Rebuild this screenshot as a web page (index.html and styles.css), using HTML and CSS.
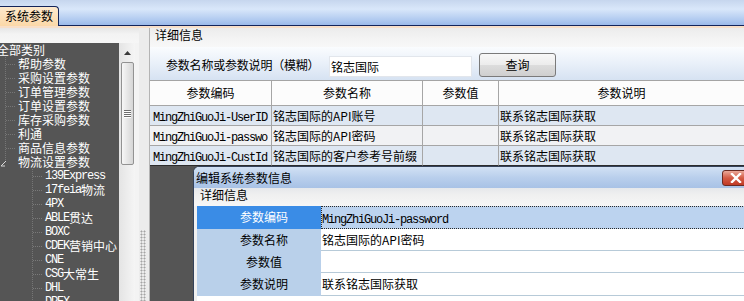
FILE: index.html
```html
<!DOCTYPE html>
<html lang="zh-CN">
<head>
<meta charset="utf-8">
<title>系统参数</title>
<link rel="stylesheet" href="styles.css">
</head>
<body>
<div class="app">
  <div class="topbar">
    <div class="tab">系统参数</div>
    <div class="tabrest"></div>
  </div>
  <div class="peach"></div>
  <div class="main">
    <div class="left">
      <div class="treewrap">
        <div class="tree">
          <div class="node root">全部类别</div>
          <div class="node l1"><span class="ind"></span>帮助参数</div>
          <div class="node l1"><span class="ind"></span>采购设置参数</div>
          <div class="node l1"><span class="ind"></span>订单管理参数</div>
          <div class="node l1"><span class="ind"></span>订单设置参数</div>
          <div class="node l1"><span class="ind"></span>库存采购参数</div>
          <div class="node l1"><span class="ind"></span>利通</div>
          <div class="node l1"><span class="ind"></span>商品信息参数</div>
          <div class="node l1 last"><span class="ind"><svg class="exp" width="7" height="7" viewBox="0 0 7 7"><path d="M6 1 L1 6 L5 6" fill="none" stroke="#d8d8d8" stroke-width="1"/></svg></span>物流设置参数</div>
          <div class="node l2"><span class="ind"></span><span class="m">139Express</span></div>
          <div class="node l2"><span class="ind"></span><span class="m">17feia</span>物流</div>
          <div class="node l2"><span class="ind"></span><span class="m">4PX</span></div>
          <div class="node l2"><span class="ind"></span><span class="m">ABLE</span>贯达</div>
          <div class="node l2"><span class="ind"></span><span class="m">BOXC</span></div>
          <div class="node l2"><span class="ind"></span><span class="m">CDEK</span>营销中心</div>
          <div class="node l2"><span class="ind"></span><span class="m">CNE</span></div>
          <div class="node l2"><span class="ind"></span><span class="m">CSG</span>大常生</div>
          <div class="node l2"><span class="ind"></span><span class="m">DHL</span></div>
          <div class="node l2"><span class="ind"></span><span class="m">DPEX</span></div>
        </div>
        <div class="vscroll">
          <div class="sup"><svg width="7" height="4" viewBox="0 0 7 4"><path d="M0 4 L3.5 0 L7 4 Z" fill="#3a3a3a"/></svg></div>
          <div class="thumb"><span></span><span></span><span></span><span></span></div>
        </div>
        <div class="gap"></div>
      </div>
    </div>
    <div class="splitter"><div class="grip"></div></div>
    <div class="right">
      <div class="grouphead">详细信息</div>
      <div class="filter">
        <span class="flabel">参数名称或参数说明（模糊）</span>
        <div class="finput">铭志国际</div>
        <button class="fbtn" type="button">查询</button>
      </div>
      <div class="grid">
        <div class="hc c1">参数编码</div>
        <div class="hc c2">参数名称</div>
        <div class="hc c3">参数值</div>
        <div class="hc c4">参数说明</div>

        <div class="rc c1 odd"><span class="m">MingZhiGuoJi-UserID</span></div>
        <div class="rc c2 odd">铭志国际的API账号</div>
        <div class="rc c3 odd"></div>
        <div class="rc c4 odd">联系铭志国际获取</div>

        <div class="rc c1 even"><span class="m">MingZhiGuoJi-passwo</span></div>
        <div class="rc c2 even">铭志国际的API密码</div>
        <div class="rc c3 even"></div>
        <div class="rc c4 even">联系铭志国际获取</div>

        <div class="rc c1 odd lastrow"><span class="m">MingZhiGuoJi-CustId</span></div>
        <div class="rc c2 odd lastrow">铭志国际的客户参考号前缀</div>
        <div class="rc c3 odd lastrow"></div>
        <div class="rc c4 odd lastrow">联系铭志国际获取</div>
      </div>
      <div class="dark">
        <div class="dialog">
          <div class="dtitle">
            <span class="dtext">编辑系统参数信息</span>
            <div class="close"><svg width="12" height="10" viewBox="0 0 12 10"><path d="M2 1 L10 9 M10 1 L2 9" stroke="#fff" stroke-width="2.4" stroke-linecap="square"/></svg></div>
          </div>
          <div class="dband">详细信息</div>
          <div class="form">
            <div class="fl sel r1">参数编码</div>
            <div class="fv selv r1"><span class="m">MingZhiGuoJi-password</span></div>
            <div class="fl r2">参数名称</div>
            <div class="fv r2">铭志国际的API密码</div>
            <div class="fl r3">参数值</div>
            <div class="fv r3"></div>
            <div class="fl r4">参数说明</div>
            <div class="fv r4">联系铭志国际获取</div>
          </div>
        </div>
      </div>
    </div>
  </div>
</div>
</body>
</html>
```

FILE: styles.css
```css
html, body {
  margin: 0;
  padding: 0;
  background: #f0f0f0;
}
.app {
  width: 744px;
  height: 301px;
  overflow: hidden;
  font-family: "Noto Sans CJK SC", "Noto Sans", sans-serif;
  font-size: 12px;
  color: #000;
}
.m {
  font-family: "Liberation Mono", "DejaVu Sans Mono", monospace;
  font-size: 12px;
  letter-spacing: -1.2px;
}

/* top bar */
.topbar {
  height: 26px;
  display: flex;
  background: linear-gradient(#c6d6ee 0%, #d9e7fa 35%, #b2cbf0 75%, #97b6e8 100%);
}
.tab {
  width: 59px;
  height: 20px;
  margin-top: 6px;
  box-sizing: border-box;
  border-top: 1px solid #13245a;
  border-right: 1px solid #13245a;
  border-top-right-radius: 4px;
  background: linear-gradient(#fde9cd, #fbd8a8);
  padding: 2px 0 0 5px;
  line-height: 14px;
  white-space: nowrap;
}
.tabrest {
  flex: 1;
  border-bottom: 1px solid #13245a;
}
.peach {
  height: 2px;
  background: #f8dfc8;
}

.main {
  display: flex;
  height: 273px;
}

/* left tree */
.left {
  width: 139px;
  flex: none;
  box-sizing: border-box;
  padding-top: 15px;
  background: linear-gradient(#e6e6e6 0, #f3f3f3 6px, #f6f6f6 15px);
}
.treewrap {
  display: flex;
  height: 258px;
}
.tree {
  width: 119px;
  flex: none;
  background: #555555;
  color: #fff;
  overflow: hidden;
}
.node {
  height: 14px;
  line-height: 14px;
  white-space: nowrap;
  display: flex;
  align-items: center;
}
.root {
  margin-left: -3px;
}
.ind {
  flex: none;
  height: 14px;
  display: block;
}
.l1 .ind {
  width: 18px;
  background:
    repeating-linear-gradient(to bottom, #767676 0 1px, transparent 1px 2px) 5px 0 / 1px 100% no-repeat,
    repeating-linear-gradient(to right, #767676 0 1px, transparent 1px 2px) 6px 7px / 10px 1px no-repeat;
}
.l1.last .ind {
  background:
    repeating-linear-gradient(to bottom, #767676 0 1px, transparent 1px 2px) 5px 0 / 1px 7px no-repeat;
}
.exp {
  display: block;
  margin: 5px 0 0 0;
}
.l2 .ind {
  width: 45px;
  background:
    repeating-linear-gradient(to bottom, #767676 0 1px, transparent 1px 2px) 32px 0 / 1px 100% no-repeat,
    repeating-linear-gradient(to right, #7a7a7a 0 1px, transparent 1px 2px) 33px 7px / 10px 1px no-repeat;
}

.vscroll {
  width: 16px;
  flex: none;
  background: linear-gradient(to right, #e4e4e4, #f5f5f5);
  display: flex;
  flex-direction: column;
}
.sup {
  height: 19px;
  display: flex;
  align-items: center;
  justify-content: center;
}
.thumb {
  margin: 0 1px 0 2px;
  height: 103px;
  box-sizing: border-box;
  border: 1px solid #929292;
  border-radius: 2px;
  background: linear-gradient(to right, #f7f7f7, #e6e6e6 50%, #d6d6d6);
  display: flex;
  flex-direction: column;
  justify-content: center;
  align-items: center;
  gap: 1px;
}
.thumb span {
  width: 7px;
  height: 1px;
  background: #6e6e6e;
  box-shadow: 0 1px 0 #fff;
}
.gap {
  width: 4px;
  flex: none;
  background: #f3f3f3;
}

.splitter {
  width: 10px;
  flex: none;
  background: #ececec;
}
.grip {
  margin: 202px 0 0 1px;
  width: 6px;
  height: 80px;
  background-image: radial-gradient(circle, #a4a4a4 0.9px, transparent 1.1px);
  background-size: 3px 3px;
}

/* right side */
.right {
  flex: 1;
  min-width: 0;
  display: flex;
  flex-direction: column;
  border-left: 1px solid #b4b4b4;
  background: #f2f2f2;
}
.grouphead {
  height: 19px;
  line-height: 13px;
  padding-left: 5px;
  background: linear-gradient(#ececec, #f4f4f4 60%, #f8f8f8);
}
.filter {
  height: 33px;
  display: flex;
  align-items: flex-start;
  padding-left: 16px;
  background: linear-gradient(#fafcfe, #e9f0f9 50%, #d6e2f2);
}
.flabel {
  width: 163px;
  flex: none;
  margin-top: 11px;
  line-height: 14px;
  white-space: nowrap;
  letter-spacing: -0.2px;
}
.finput {
  width: 143px;
  height: 21px;
  margin-top: 9px;
  box-sizing: border-box;
  background: #fff;
  border: 1px solid #e2e6ec;
  padding-left: 1px;
  line-height: 19px;
}
.fbtn {
  width: 77px;
  height: 24px;
  margin: 6px 0 0 7px;
  box-sizing: border-box;
  border: 1px solid #7a7a7a;
  border-radius: 3px;
  background: linear-gradient(#f8f8f8 0%, #ececec 48%, #dcdcdc 52%, #cfcfcf 100%);
  font-family: "Noto Sans CJK SC", sans-serif;
  font-size: 12px;
  color: #000;
  padding: 0;
  line-height: 20px;
}

.grid {
  display: grid;
  grid-template-columns: 122px 151px 76px 1fr;
  border-top: 1px solid #a4a4a4;
}
.grid > div {
  box-sizing: border-box;
  border-right: 1px solid #a6a6a6;
  border-bottom: 1px solid #a6a6a6;
  white-space: nowrap;
  overflow: hidden;
}
.grid > .c4 {
  border-right: none;
}
.hc {
  height: 25px;
  line-height: 24px;
  text-align: center;
  background: #fcfcfc;
}
.rc {
  height: 20px;
  line-height: 19px;
  padding-left: 1px;
}
.rc.c1 {
  padding-left: 3px;
}
.odd {
  background: #dee7f2;
}
.even {
  background: #f1f2f4;
}
.grid > .lastrow {
  border-bottom-color: #2c2c2c;
}

.dark {
  flex: 1;
  background: #555555;
  padding-left: 43px;
  overflow: hidden;
  display: flex;
}
.dialog {
  width: 600px;
  flex: none;
  box-sizing: border-box;
  border-top: 1px solid #34425a;
  border-left: 1px solid #34425a;
  border-top-left-radius: 6px;
  background: #f0f0f0;
  overflow: hidden;
}
.dtitle {
  height: 21px;
  display: flex;
  align-items: center;
  padding-left: 2px;
  background: linear-gradient(#d2e1f4, #b9cfec 50%, #a8c2e6);
}
.dtext {
  white-space: nowrap;
  line-height: 14px;
}
.close {
  margin-left: 430px;
  width: 28px;
  height: 16px;
  box-sizing: border-box;
  border: 1px solid #6b2a22;
  border-radius: 3px;
  background: linear-gradient(#eaa99a, #d45b45 50%, #c03a25);
  display: flex;
  align-items: center;
  justify-content: center;
}
.dband {
  height: 18px;
  line-height: 14px;
  padding-left: 6px;
  background: linear-gradient(#e6e8eb, #f0f0f0 40%, #f6f6f6);
}
.form {
  margin-left: 3px;
  background: #fff;
  display: grid;
  grid-template-columns: 124px 1fr;
  padding-bottom: 20px;
}
.fl {
  background: #b9d0ea;
  text-align: center;
  padding-left: 10px;
  box-sizing: border-box;
}
.fv {
  box-sizing: border-box;
  border-bottom: 1px solid #b7cad8;
  padding-left: 1px;
  white-space: nowrap;
}
.r1 { height: 23px; line-height: 21px; }
.r2 { height: 22px; line-height: 21px; }
.r3 { height: 22px; line-height: 21px; }
.r4 { height: 23px; line-height: 22px; }
.fl.sel {
  background: #3a8ce6;
  color: #fff;
}
.fv.selv {
  background: #bcd3ef;
  border: 1px dotted #2a2a2a;
  padding-left: 0;
}
```
